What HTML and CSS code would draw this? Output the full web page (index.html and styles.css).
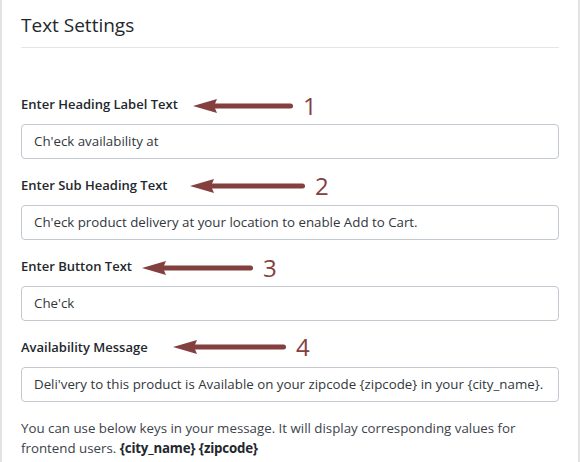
FILE: index.html
```html
<!DOCTYPE html>
<html>
<head>
<meta charset="utf-8">
<link rel="stylesheet" href="styles.css">
</head>
<body>
<div class="panel">
  <h2 class="title">Text Settings</h2>
  <div class="fields">
    <div class="field">
      <label class="label">Enter Heading Label Text</label>
      <div class="input">Ch'eck availability at</div>
      <div class="note n1"><svg class="arrow" width="100" height="16" viewBox="0 0 100 16"><path d="M0 8 L24 1 L21 8 L24 15 Z" /><line x1="20" y1="8" x2="97.5" y2="8" /></svg><span class="num">1</span></div>
    </div>
    <div class="field">
      <label class="label">Enter Sub Heading Text</label>
      <div class="input">Ch'eck product delivery at your location to enable Add to Cart.</div>
      <div class="note n2"><svg class="arrow" width="115" height="16" viewBox="0 0 115 16"><path d="M0 8 L24 1 L21 8 L24 15 Z" /><line x1="20" y1="8" x2="112.5" y2="8" /></svg><span class="num">2</span></div>
    </div>
    <div class="field">
      <label class="label">Enter Button Text</label>
      <div class="input">Che'ck</div>
      <div class="note n3"><svg class="arrow" width="111" height="16" viewBox="0 0 111 16"><path d="M0 8 L24 1 L21 8 L24 15 Z" /><line x1="20" y1="8" x2="108.5" y2="8" /></svg><span class="num">3</span></div>
    </div>
    <div class="field">
      <label class="label">Availability Message</label>
      <div class="input">Deli'very to this product is Available on your zipcode {zipcode} in your {city_name}.</div>
      <div class="note n4"><svg class="arrow" width="113" height="16" viewBox="0 0 113 16"><path d="M0 8 L24 1 L21 8 L24 15 Z" /><line x1="20" y1="8" x2="110.5" y2="8" /></svg><span class="num">4</span></div>
    </div>
  </div>
  <div class="help">
    <div class="help-line">You can use below keys in your message. It will display corresponding values for</div>
    <div class="help-line"><span>frontend users.</span> <strong>{city_name}</strong> <strong>{zipcode}</strong></div>
  </div>
</div>
</body>
</html>
```

FILE: styles.css
```css
html, body {
  margin: 0;
  padding: 0;
  background: #ffffff;
}
body {
  font-family: "Open Sans", "Noto Sans", sans-serif;
  color: #23282d;
}
.panel {
  width: 538px;
  height: 462px;
  border-left: 2px solid #e2e2e2;
  border-right: 2px solid #e2e2e2;
  padding: 0 19px;
  overflow: hidden;
}
.title {
  margin: 0;
  padding: 11px 0 8px;
  font-size: 19px;
  line-height: 28px;
  font-weight: 400;
  color: #23282d;
  border-bottom: 1px solid #e6e6e6;
}
.fields {
  padding-top: 46px;
  display: flex;
  flex-direction: column;
  gap: 16px;
}
.field {
  position: relative;
  display: flex;
  flex-direction: column;
  gap: 10px;
}
.label {
  font-size: 13px;
  line-height: 20px;
  font-weight: 600;
  color: #23282d;
}
.input {
  height: 33px;
  border: 1px solid #c3c9d0;
  border-radius: 4px;
  padding: 0 12px;
  font-size: 13.3px;
  line-height: 33px;
  color: #32373c;
  white-space: nowrap;
}
.note {
  position: absolute;
  top: 0;
  display: flex;
  align-items: center;
  gap: 10px;
  color: #843f3f;
}
.arrow path {
  fill: #843f3f;
}
.arrow line {
  stroke: #843f3f;
  stroke-width: 5;
  stroke-linecap: round;
}
.num {
  font-size: 24px;
  line-height: 20px;
  font-weight: 400;
  color: #843f3f;
}
.n1 { left: 172px; top: 2px; }
.n2 { left: 169px; top: 1px; }
.n3 { left: 121px; top: 2px; }
.n4 { left: 152px; top: 0px; }
.help {
  margin: 16px 0 0;
  font-size: 13.3px;
  line-height: 20px;
  color: #3c434a;
}
.help-line {
  white-space: nowrap;
}
.help strong {
  font-weight: 700;
  color: #23282d;
  letter-spacing: -0.2px;
}
```
